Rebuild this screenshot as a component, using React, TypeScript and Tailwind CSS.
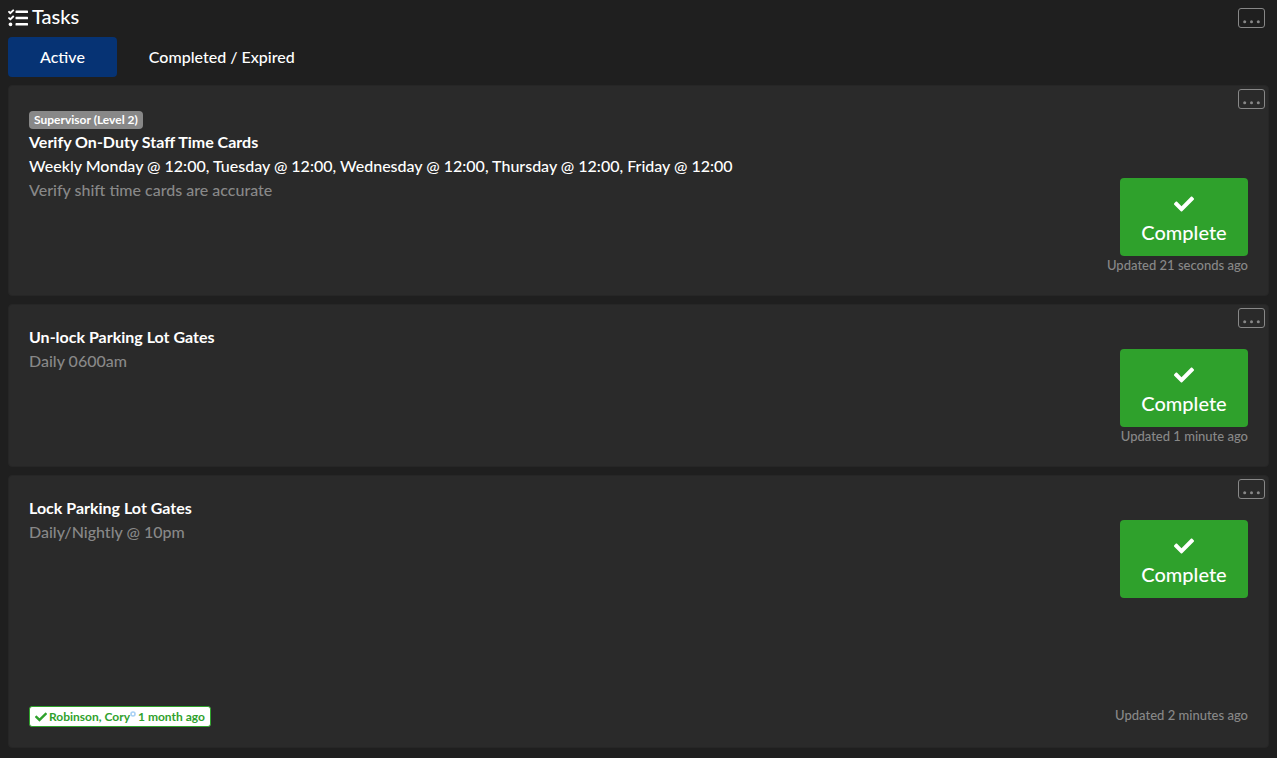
import React, { useState } from 'react';
import { FaCheck, FaTasks } from 'react-icons/fa';
import clsx from 'clsx';

interface Task {
  id: number;
  title: string;
  description: string;
  updated: string;
  role?: string;
  schedule?: string;
  completedBy?: string;
  completedAgo?: string;
}

const tasks: Task[] = [
  {
    id: 1,
    role: 'Supervisor (Level 2)',
    title: 'Verify On-Duty Staff Time Cards',
    schedule:
      'Weekly Monday @ 12:00, Tuesday @ 12:00, Wednesday @ 12:00, Thursday @ 12:00, Friday @ 12:00',
    description: 'Verify shift time cards are accurate',
    updated: 'Updated 21 seconds ago',
  },
  {
    id: 2,
    title: 'Un-lock Parking Lot Gates',
    description: 'Daily 0600am',
    updated: 'Updated 1 minute ago',
  },
  {
    id: 3,
    title: 'Lock Parking Lot Gates',
    description: 'Daily/Nightly @ 10pm',
    updated: 'Updated 2 minutes ago',
    completedBy: 'Robinson, Cory',
    completedAgo: '1 month ago',
  },
];

const tabs = ['Active', 'Completed / Expired'];

const MoreButton = ({ label }: { label: string }) => (
  <button
    type="button"
    aria-label={label}
    className="flex h-5 w-[27px] items-center justify-center rounded-[3px] border border-[#888888] text-[#888888] hover:bg-[#3a3a3a]"
  >
    <svg width="19" height="18" viewBox="0 0 19 18" fill="currentColor" aria-hidden="true">
      <circle cx="2.7" cy="12.7" r="1.5" />
      <circle cx="9.5" cy="12.7" r="1.5" />
      <circle cx="16.3" cy="12.7" r="1.5" />
    </svg>
  </button>
);

const TaskCard = ({ task }: { task: Task }) => (
  <article className="relative rounded border border-[#262626] bg-[#2a2a2a] p-5">
    <div className="absolute top-[3px] right-[3px]">
      <MoreButton label={`Options for ${task.title}`} />
    </div>

    {task.role && (
      <div className="flex h-6 items-end pb-px">
        <span className="rounded bg-[#888888] px-[5px] text-xs leading-[18px] font-bold">{task.role}</span>
      </div>
    )}
    <h2 className="font-bold">{task.title}</h2>
    {task.schedule && <p>{task.schedule}</p>}

    <div className="flex items-start justify-between gap-4">
      <p className="text-[#888888]">{task.description}</p>
      <button
        type="button"
        className="flex w-32 flex-col items-center rounded bg-[#2fa12c] py-[9px] text-xl leading-[30px] hover:bg-[#278a24]"
      >
        <span className="flex h-[30px] items-center pt-1">
          <FaCheck size={20} aria-hidden="true" />
        </span>
        Complete
      </button>
    </div>

    {/* Last completion and update time */}
    <div className={clsx('flex items-start justify-between', task.completedBy && 'mt-[108px]')}>
      {task.completedBy && (
        <span className="flex items-center rounded-[3px] border border-[#2fa12c] bg-white px-[5px] text-xs leading-[19px] font-bold text-[#2fa12c]">
          <FaCheck size={12} className="mr-0.5" aria-hidden="true" />
          {task.completedBy}
          <svg width="6" height="6" viewBox="0 0 6 6" className="mb-1.5" aria-hidden="true">
            <circle cx="3" cy="3" r="2" fill="none" stroke="#a9d1f5" strokeWidth="1.6" />
          </svg>
          <span className="ml-0.5">{task.completedAgo}</span>
        </span>
      )}
      <span className="ml-auto text-[13px] leading-[19px] text-[#888888]">{task.updated}</span>
    </div>
  </article>
);

const App = () => {
  const [activeTab, setActiveTab] = useState(tabs[0]);

  return (
    <main className="min-h-screen bg-[#1f1f1f] p-2 font-[Lato,sans-serif] text-base font-medium text-white">
      {/* Header */}
      <header className="flex items-start justify-between pr-1">
        <h1 className="flex h-[29px] items-start gap-1 text-xl leading-4 font-medium">
          <FaTasks size={20} aria-hidden="true" />
          Tasks
        </h1>
        <MoreButton label="Task options" />
      </header>

      <nav className="flex">
        {tabs.map((tab) => (
          <button
            key={tab}
            type="button"
            onClick={() => setActiveTab(tab)}
            className={clsx('rounded px-8 py-2', activeTab === tab && 'bg-[#063374]')}
          >
            {tab}
          </button>
        ))}
      </nav>

      {/* Task list */}
      <div className="mt-2 flex flex-col gap-2">
        {activeTab === 'Active' && tasks.map((task) => <TaskCard key={task.id} task={task} />)}
      </div>
    </main>
  );
};

export default App;
